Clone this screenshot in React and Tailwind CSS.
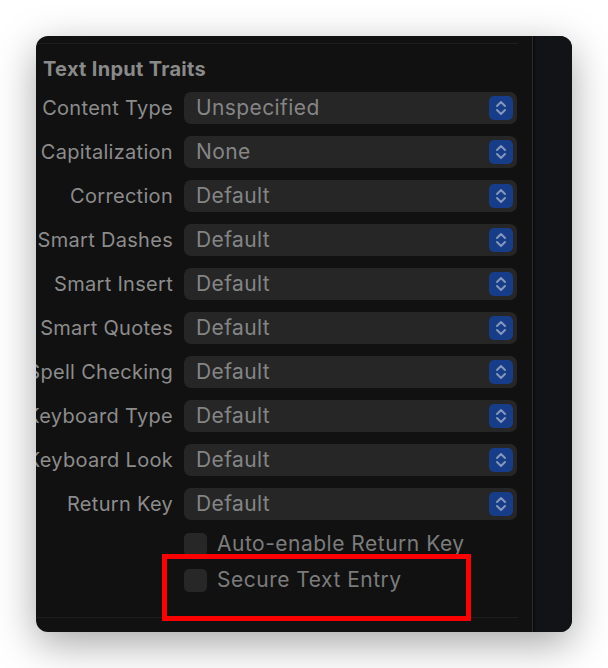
import React from 'react'

const rows = [
  ['Content Type', 'Unspecified'],
  ['Capitalization', 'None'],
  ['Correction', 'Default'],
  ['Smart Dashes', 'Default'],
  ['Smart Insert', 'Default'],
  ['Smart Quotes', 'Default'],
  ['Spell Checking', 'Default'],
  ['Keyboard Type', 'Default'],
  ['Keyboard Look', 'Default'],
  ['Return Key', 'Default'],
]

function Stepper() {
  return (
    <div className="w-[24px] h-[24px] rounded-[5px] bg-[#173c88] flex items-center justify-center">
      <svg width="14" height="18" viewBox="0 0 14 18" fill="none" stroke="#8796b8" strokeWidth="2" strokeLinecap="round" strokeLinejoin="round">
        <path d="M3 7 L7 3 L11 7" />
        <path d="M3 11 L7 15 L11 11" />
      </svg>
    </div>
  )
}

function Checkbox({ label }) {
  return (
    <div className="h-[36px] flex items-center pl-[148px]">
      <div className="w-[23px] h-[23px] rounded-[5px] bg-[#272727]" />
      <span className="ml-[10px] text-[21px] tracking-[0.5px] text-[#7c7c7c] whitespace-nowrap">{label}</span>
    </div>
  )
}

export default function App() {
  return (
    <div className="w-[608px] h-[668px] bg-white pt-[36px] pl-[36px]" style={{ fontFamily: 'Inter, "Noto Sans", sans-serif' }}>
      <div className="relative w-[536px] h-[596px] rounded-[12px] overflow-hidden bg-[#111111] flex shadow-[0_12px_40px_rgba(0,0,0,0.35)]">
        <div className="w-[496px] flex flex-col">
          <div className="mt-[7px] h-[1px] w-[482px] bg-[#1e1e1e]" />
          <div className="mt-[13px] ml-[7px] h-[24px] leading-[24px] text-[20px] tracking-[0.3px] font-bold text-[#8a8a8a] whitespace-nowrap">
            Text Input Traits
          </div>
          <div className="mt-[5px] flex flex-col">
            {rows.map(([label, value]) => (
              <div key={label} className="h-[44px] flex items-center">
                <div className="w-[137px] flex justify-end whitespace-nowrap text-[20px] tracking-[0.3px] text-[#8c8c8c]">
                  <span>{label}</span>
                </div>
                <div className="ml-[11px] w-[333px] h-[32px] rounded-[7px] bg-[#262626] flex items-center justify-between pl-[12px] pr-[4px]">
                  <span className="text-[21px] tracking-[0.4px] text-[#858585]">{value}</span>
                  <Stepper />
                </div>
              </div>
            ))}
          </div>
          <Checkbox label="Auto-enable Return Key" />
          <Checkbox label="Secure Text Entry" />
          <div className="mt-[19px] h-[1px] w-[482px] bg-[#1e1e1e]" />
        </div>
        <div className="w-[1px] bg-[#2a2a2a]" />
        <div className="w-[2px] bg-[#0c0c0c]" />
        <div className="flex-1 bg-[#121317]" />
        <div className="absolute left-[126px] top-[518px] w-[309px] h-[67px] border-[5px] border-[#ff0000]" />
      </div>
    </div>
  )
}
